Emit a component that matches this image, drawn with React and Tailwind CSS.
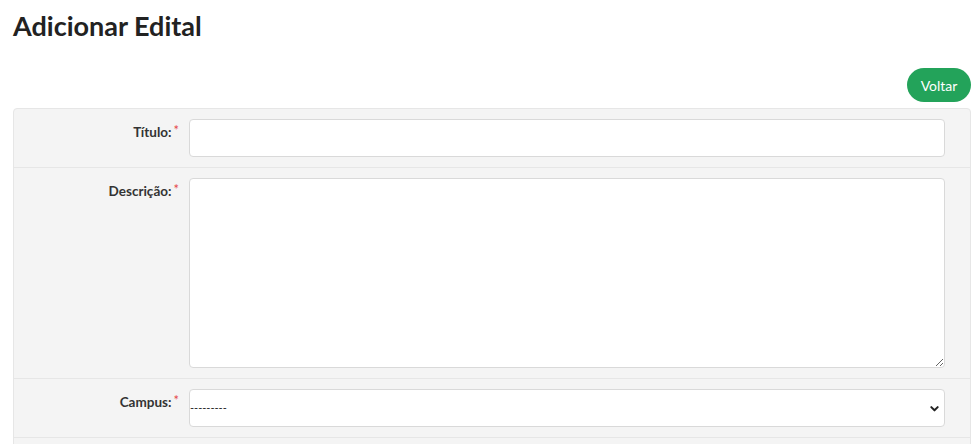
export default function App() {
  const label = 'w-[175px] shrink-0 pr-[10px] pt-[3px] text-right text-[13.5px] font-bold leading-5 text-[#333]'
  const star = <span className="relative top-[-2px] ml-[2px] text-[13px] font-normal text-[#e54848]">*</span>

  return (
    <div className="min-h-screen bg-white pl-[13px] pr-[2px] font-['Lato',sans-serif] text-[#222]">
      <h1 className="pt-[9px] text-[27px] font-bold leading-[34px] text-[#222]">Adicionar Edital</h1>

      <div className="mt-[25px] flex justify-end">
        <button className="h-[34px] w-[64px] rounded-full bg-[#23a35a] text-[14px] text-white">Voltar</button>
      </div>

      <div className="mt-[6px] rounded-t-[4px] border border-[#e6e6e6] bg-[#f4f4f4]">
        <div className="flex border-b border-[#e6e6e6] py-[10px] pr-[25px]">
          <label className={label}>Título:{star}</label>
          <input className="h-[38px] flex-1 rounded-[4px] border border-[#d9d9d9] bg-white" />
        </div>

        <div className="flex border-b border-[#e6e6e6] py-[10px] pr-[25px]">
          <label className={label}>Descrição:{star}</label>
          <textarea className="h-[190px] flex-1 rounded-[4px] border border-[#d9d9d9] bg-white" />
        </div>

        <div className="flex border-b border-[#e6e6e6] py-[10px] pr-[25px]">
          <label className={label}>Campus:{star}</label>
          <div className="relative flex-1">
            <select className="h-[38px] w-full appearance-none rounded-[4px] border border-[#d9d9d9] bg-white pl-0 text-[11px] text-[#222]">
              <option>---------</option>
            </select>
            <svg className="pointer-events-none absolute right-[5px] top-[14px]" width="11" height="11" viewBox="0 0 12 12" fill="none" stroke="#222" strokeWidth="2.2" strokeLinecap="round" strokeLinejoin="round">
              <path d="M2.5 4.5L6 8l3.5-3.5" />
            </svg>
          </div>
        </div>
        <div className="h-[8px]" />
      </div>
    </div>
  )
}
